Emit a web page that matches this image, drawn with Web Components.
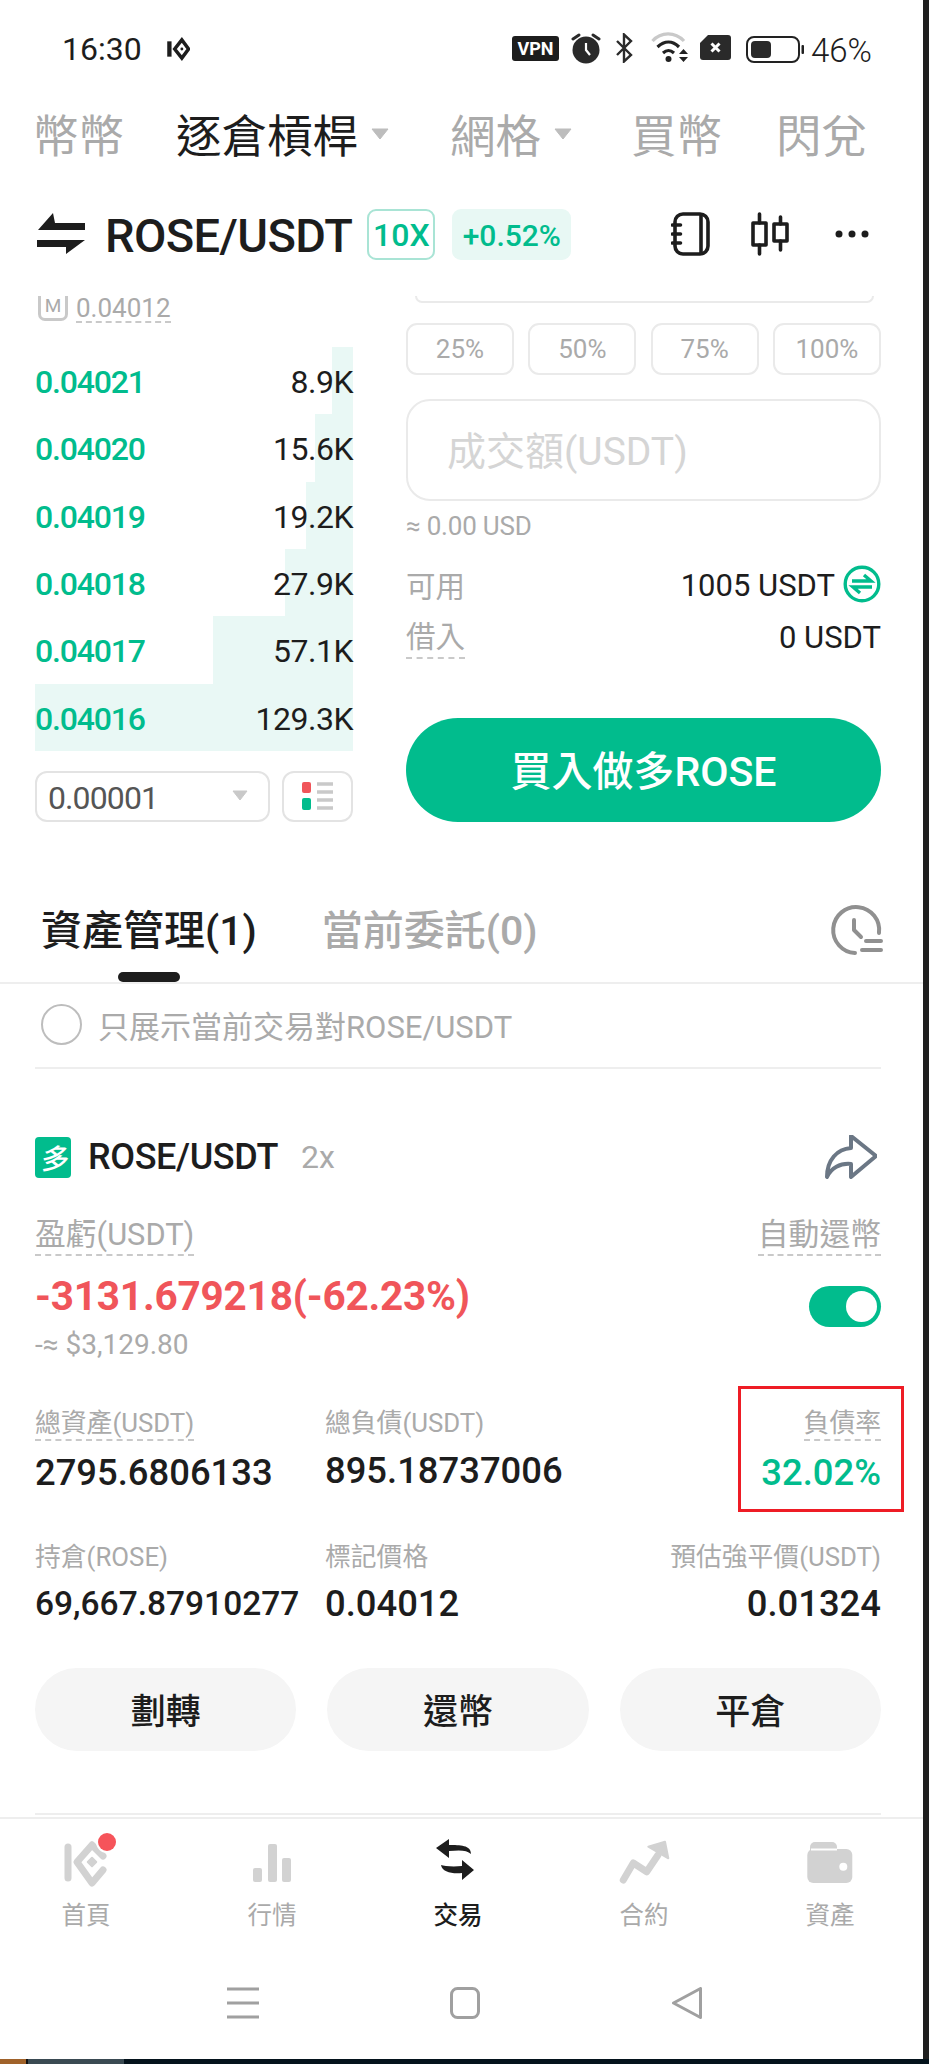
<!DOCTYPE html>
<html lang="zh-Hant">
<head>
<meta charset="UTF-8">
<title>ROSE/USDT</title>
<style>
  html, body { margin: 0; padding: 0; }
  body {
    width: 929px;
    height: 2064px;
    overflow: hidden;
    background: #1f1f1f;
    color: #1d1d1d;
    font-family: Roboto, "Noto Sans CJK TC", sans-serif;
    display: flex;
    flex-direction: column;
  }
  .app {
    width: 923px;
    flex: 1;
    min-height: 0;
    background: #fff;
    display: flex;
    flex-direction: column;
    overflow: hidden;
  }
  .app > :not(position-card) { flex: none; }
</style>
</head>
<body>
<div class="app">
  <status-bar></status-bar>
  <market-tabs>
    <market-tab style="margin-left:33px">幣幣</market-tab>
    <market-tab style="margin-left:52px" active caret>逐倉槓桿</market-tab>
    <market-tab style="margin-left:61px" caret>網格</market-tab>
    <market-tab style="margin-left:59px">買幣</market-tab>
    <market-tab style="margin-left:54px">閃兌</market-tab>
  </market-tabs>
  <pair-header></pair-header>
  <trade-panel>
    <order-book slot="left">
      <book-row price="0.04021" qty="8.9K" w="21.5"></book-row>
      <book-row price="0.04020" qty="15.6K" w="38"></book-row>
      <book-row price="0.04019" qty="19.2K" w="47"></book-row>
      <book-row price="0.04018" qty="27.9K" w="68"></book-row>
      <book-row price="0.04017" qty="57.1K" w="140"></book-row>
      <book-row price="0.04016" qty="129.3K" w="318"></book-row>
    </order-book>
    <trade-form slot="right"></trade-form>
  </trade-panel>
  <asset-tabs></asset-tabs>
  <position-card>
    <stat-cell slot="stats" label="總資產(USDT)" value="2795.6806133" dashed></stat-cell>
    <stat-cell slot="stats" label="總負債(USDT)" value="895.18737006" lift></stat-cell>
    <stat-cell slot="stats" label="負債率" value="32.02%" dashed end up></stat-cell>
    <stat-cell slot="stats" label="持倉(ROSE)" value="69,667.87910277" small near></stat-cell>
    <stat-cell slot="stats" label="標記價格" value="0.04012" near></stat-cell>
    <stat-cell slot="stats" label="預估強平價(USDT)" value="0.01324" end near></stat-cell>
    <pill-button slot="actions">劃轉</pill-button>
    <pill-button slot="actions">還幣</pill-button>
    <pill-button slot="actions">平倉</pill-button>
  </position-card>
  <bottom-nav>
    <nav-item icon="home">首頁</nav-item>
    <nav-item icon="market">行情</nav-item>
    <nav-item icon="trade" active>交易</nav-item>
    <nav-item icon="futures">合約</nav-item>
    <nav-item icon="wallet">資產</nav-item>
  </bottom-nav>
  <gesture-bar></gesture-bar>
</div>
<task-strip></task-strip>

<script>
const green = "#01bc8d";

class StatusBar extends HTMLElement {
  constructor() {
    super();
    this.attachShadow({ mode: "open" }).innerHTML = `
      <style>
        :host { display: flex; align-items: flex-start; height: 90px; box-sizing: border-box; padding: 29px 0 0 62px; color: #1d1d1d; }
        .time { font-size: 32px; line-height: 40px; width: 105px; }
        svg { display: block; flex: none; }
        .k { margin-top: 8px; width: 23px; height: 24px; margin-right: 322px; }
        .pct { font-size: 33px; font-weight: 300; line-height: 44px; margin-left: 7px; }
      </style>
      <span class="time">16:30</span>
      <svg class="k" viewBox="0 0 24 24" fill="none" stroke="#1d1d1d">
        <path d="M2.500 4v16" stroke-width="4.500"/>
        <path d="M15.500 2.500 8 12l7.500 9.500L22.500 12z" stroke-width="3.600"/>
        <circle cx="15.500" cy="12" r="1.500" fill="#1d1d1d" stroke="none"/>
      </svg>
      <svg width="47" height="25" viewBox="0 0 47 25" style="margin-top:7px">
        <rect width="47" height="25" rx="3" fill="#1d1d1d"/>
        <text x="23.500" y="19" text-anchor="middle" font-family="Roboto" font-weight="700" font-size="18" fill="#fff">VPN</text>
      </svg>
      <svg width="30" height="32" viewBox="0 0 30 32" style="margin:3px 0 0 12px">
        <circle cx="15" cy="18" r="13.500" fill="#2a2a2a"/>
        <path d="M2 7l6-4M28 7l-6-4" stroke="#2a2a2a" stroke-width="3" stroke-linecap="round"/>
        <path d="M15 11v7l4 5" fill="none" stroke="#fff" stroke-width="2.200"/>
      </svg>
      <svg width="18" height="30" viewBox="0 0 18 30" style="margin:4px 0 0 14px">
        <path d="M2 8l14 14-7 6.500V1.500L16 8 2 22" fill="none" stroke="#2a2a2a" stroke-width="2.400"/>
      </svg>
      <svg width="38" height="31" viewBox="0 0 38 31" style="margin:3px 0 0 18px">
        <path d="M1.500 9C10-.5 24-.5 33 9" fill="none" stroke="#c9c9c9" stroke-width="3.200"/>
        <path d="M6.500 15c7-6.500 15-6.500 21.500 0M12 21c4-3.500 7-3.500 11 0" fill="none" stroke="#222" stroke-width="3.200"/>
        <circle cx="17.500" cy="27" r="3" fill="#222"/>
        <path d="M28 22h9l-4.500-5zM28 25h9l-4.500 5z" fill="#222"/>
      </svg>
      <svg width="31" height="25" viewBox="0 0 31 25" style="margin:6px 0 0 11px">
        <path d="M8 0h20a3 3 0 0 1 3 3v19a3 3 0 0 1-3 3H3a3 3 0 0 1-3-3V8z" fill="#2a2a2a"/>
        <path d="M11.500 8.500l8 8M19.500 8.500l-8 8" stroke="#fff" stroke-width="3"/>
      </svg>
      <svg width="58" height="27" viewBox="0 0 58 27" style="margin:7px 0 0 15px">
        <rect x="1" y="1" width="52" height="25" rx="7" fill="none" stroke="#222" stroke-width="2"/>
        <rect x="5" y="5" width="20" height="17" rx="4" fill="#2a2a2a"/>
        <rect x="55.500" y="9" width="2.500" height="9" rx="1" fill="#222"/>
      </svg>
      <span class="pct">46%</span>`;
  }
}

class MarketTabs extends HTMLElement {
  constructor() {
    super();
    this.attachShadow({ mode: "open" }).innerHTML = `
      <style>:host { display: flex; align-items: center; height: 90px; box-sizing: border-box; padding-top: 5px; }</style>
      <slot></slot>`;
  }
}

class MarketTab extends HTMLElement {
  constructor() {
    super();
    this.attachShadow({ mode: "open" }).innerHTML = `
      <style>
        :host { display: flex; align-items: center; font-size: 45.500px; line-height: 56px; color: #aaa; }
        :host([active]) { color: #1d1d1d; }
        svg { display: none; margin-left: 13px; margin-top: -8px; }
        :host([caret]) svg { display: block; }
      </style>
      <slot></slot>
      <svg width="18" height="12" viewBox="0 0 18 12"><path d="M1 1h16l-8 10z" fill="#bdbdbd" stroke="#bdbdbd" stroke-linejoin="round"/></svg>`;
  }
}

class PairHeader extends HTMLElement {
  constructor() {
    super();
    this.attachShadow({ mode: "open" }).innerHTML = `
      <style>
        :host { display: flex; align-items: center; height: 116px; box-sizing: border-box; padding: 0 0 8px 37px; }
        svg { display: block; flex: none; }
        .name { font-size: 47px; font-weight: 500; margin: 3px 0 0 20px; letter-spacing: -.6px; white-space: nowrap; }
        .lev, .chg { box-sizing: border-box; height: 51px; border-radius: 9px; display: flex; align-items: center; justify-content: center; color: ${green}; font-weight: 500; }
        .lev { width: 68px; margin-left: 15px; border: 2px solid #a9e4d5; font-size: 32px; padding-top: 2px; }
        .chg { width: 119px; margin-left: 17px; background: #e8f8f4; font-size: 30px; padding-top: 2px; }
        .tools { margin-left: 100px; display: flex; align-items: center; }
      </style>
      <svg width="48" height="42" viewBox="0 0 48 42">
        <path d="M16 0 1 17h47v-7H18zM0 27h48L29 41v-7H0z" fill="#1d1d1d"/>
      </svg>
      <span class="name">ROSE/USDT</span>
      <span class="lev">10X</span>
      <span class="chg">+0.52%</span>
      <div class="tools">
        <svg width="39" height="44" viewBox="0 0 39 44" fill="none" stroke="#1d1d1d" stroke-width="3.600" stroke-linecap="round">
          <rect x="4" y="2" width="33" height="40" rx="8"/>
          <path d="M30 3v38M1.500 13h8M1.500 22h8M1.500 31h8"/>
        </svg>
        <svg width="38" height="44" viewBox="0 0 38 44" fill="none" stroke="#1d1d1d" stroke-width="3.600" stroke-linecap="round" stroke-linejoin="round" style="margin-left:41px">
          <rect x="2" y="11" width="13" height="22"/><path d="M8.500 2v9M8.500 33v9"/>
          <rect x="23" y="12" width="13" height="17"/><path d="M29.500 5v7M29.500 29v9"/>
        </svg>
        <svg width="34" height="8" viewBox="0 0 34 8" fill="#1d1d1d" style="margin-left:46px">
          <circle cx="4" cy="4" r="3.500"/><circle cx="17" cy="4" r="3.500"/><circle cx="30" cy="4" r="3.500"/>
        </svg>
      </div>`;
  }
}

class TradePanel extends HTMLElement {
  constructor() {
    super();
    this.attachShadow({ mode: "open" }).innerHTML = `
      <style>
        :host { display: grid; grid-template-columns: 318px 475px; column-gap: 53px; height: 544px; padding-left: 35px; }
      </style>
      <slot name="left"></slot>
      <slot name="right"></slot>`;
  }
}

class OrderBook extends HTMLElement {
  constructor() {
    super();
    this.attachShadow({ mode: "open" }).innerHTML = `
      <style>
        :host { display: block; }
        .mark { height: 51px; display: flex; align-items: flex-start; padding-left: 3px; box-sizing: border-box; }
        .m { box-sizing: border-box; width: 30px; height: 25px; border: 3px solid #c9c9c9; border-top: none; border-radius: 0 0 7px 7px; font-size: 19px; line-height: 20px; text-align: center; color: #aaa; }
        .v { margin-left: 8px; font-size: 26px; line-height: 24px; height: 25px; color: #aaa; border-bottom: 2px dashed #c9c9c9; }
        .rows { display: grid; grid-auto-rows: 67.330px; }
        .tools { display: flex; gap: 12px; margin-top: 20px; height: 51px; }
        .sel, .mode { box-sizing: border-box; height: 51px; border: 2px solid #e3e3e3; border-radius: 12px; display: flex; align-items: center; }
        .sel { width: 236px; padding: 3px 20px 0 11px; justify-content: space-between; font-size: 32px; letter-spacing: -.9px; color: #555; }
        .sel svg { margin-top: -4px; }
        .mode { width: 71px; justify-content: center; }
      </style>
      <div class="mark"><span class="m">M</span><span class="v">0.04012</span></div>
      <div class="rows"><slot></slot></div>
      <div class="tools">
        <div class="sel"><span>0.00001</span>
          <svg width="16" height="11" viewBox="0 0 16 11"><path d="M1 1h14l-7 9z" fill="#c9c9c9" stroke="#c9c9c9" stroke-linejoin="round"/></svg>
        </div>
        <div class="mode">
          <svg width="32" height="28" viewBox="0 0 32 28">
            <rect width="9" height="11" rx="2" fill="#f0555a"/><rect y="16" width="9" height="12" rx="2" fill="${green}"/>
            <path d="M15 2h16M15 10h16M15 18h16M15 26h16" stroke="#c9c9c9" stroke-width="3.600"/>
          </svg>
        </div>
      </div>`;
  }
}

class BookRow extends HTMLElement {
  constructor() {
    super();
    this.attachShadow({ mode: "open" }).innerHTML = `
      <style>
        :host { display: flex; align-items: center; justify-content: space-between; box-sizing: border-box; padding-top: 3px; font-size: 32px; background: linear-gradient(#e9f8f5, #e9f8f5) right top / var(--w) 100% no-repeat; }
        .p { color: ${green}; font-weight: 500; letter-spacing: -1.200px; }
        .q { letter-spacing: -.5px; }
      </style>
      <span class="p"></span><span class="q"></span>`;
  }
  connectedCallback() {
    this.style.setProperty("--w", this.getAttribute("w") + "px");
    this.shadowRoot.querySelector(".p").textContent = this.getAttribute("price");
    this.shadowRoot.querySelector(".q").textContent = this.getAttribute("qty");
  }
}

class TradeForm extends HTMLElement {
  constructor() {
    super();
    this.attachShadow({ mode: "open" }).innerHTML = `
      <style>
        :host { display: block; }
        .stub { height: 5px; margin: 0 7px 0 9px; border: 2px solid #eaeaea; border-top: none; border-radius: 0 0 14px 14px; }
        .pcts { display: grid; grid-template-columns: repeat(4, 108px); column-gap: 14.300px; margin-top: 20px; }
        .pcts span { box-sizing: border-box; height: 52px; border: 2px solid #eaeaea; border-radius: 11px; display: flex; align-items: center; justify-content: center; font-size: 26px; color: #aaa; }
        .input { box-sizing: border-box; height: 102px; margin-top: 24px; border: 2px solid #eaeaea; border-radius: 24px; padding: 0 0 5px 39px; display: flex; align-items: center; font-size: 39px; color: #d5d5d5; }
        .approx { margin-top: 8px; font-size: 26px; letter-spacing: -.2px; line-height: 34px; color: #aaa; }
        .row { display: flex; justify-content: space-between; align-items: flex-start; }
        .avail { margin-top: 22px; height: 44px; }
        .lab { font-size: 29.500px; line-height: 44px; color: #aaa; }
        .val { font-size: 31px; line-height: 40px; padding-top: 1px; display: flex; gap: 8px; }
        .val svg { display: block; margin-top: -1px; }
        .borrow { margin-top: 8px; }
        .borrow .lab { line-height: 40px; border-bottom: 2px dashed #c9c9c9; }
        button { display: block; width: 475px; height: 104px; margin-top: 59px; padding: 0 0 4px; border: 0; border-radius: 52px; background: ${green}; color: #fff; font: 500 41px Roboto, "Noto Sans CJK TC", sans-serif; }
      </style>
      <div class="stub"></div>
      <div class="pcts"><span>25%</span><span>50%</span><span>75%</span><span>100%</span></div>
      <div class="input">成交額(USDT)</div>
      <div class="approx">≈ 0.00 USD</div>
      <div class="row avail">
        <span class="lab">可用</span>
        <span class="val">1005 USDT
          <svg width="38" height="38" viewBox="0 0 38 38" fill="none" stroke="${green}" stroke-width="3.400">
            <circle cx="19" cy="19" r="16.800"/>
            <path d="M9 16h19l-7-6M29 22H10l7 6"/>
          </svg>
        </span>
      </div>
      <div class="row borrow">
        <span class="lab">借入</span>
        <span class="val">0 USDT</span>
      </div>
      <button>買入做多ROSE</button>`;
  }
}

class AssetTabs extends HTMLElement {
  constructor() {
    super();
    this.attachShadow({ mode: "open" }).innerHTML = `
      <style>
        :host { display: flex; align-items: center; position: relative; box-sizing: border-box; height: 144px; padding: 64px 39px 24px 41px; border-bottom: 2px solid #eee; font-size: 41px; font-weight: 500; line-height: 56px; }
        .off { color: #aaa; margin-left: 65px; flex: 1; }
        svg { display: block; }
        .ind { position: absolute; left: 118px; top: 132px; width: 62px; height: 10px; border-radius: 5px; background: #1d1d1d; }
      </style>
      <span>資產管理(1)</span>
      <span class="off">當前委託(0)</span>
      <svg width="64" height="65" viewBox="0 0 64 65" fill="none" stroke="#909090" stroke-width="4" stroke-linecap="round" stroke-linejoin="round" style="margin-top:-2px">
        <path d="M59 35A23 23 0 1 0 35 55M34 22v10l7 7M46 43h15M42 52h19"/>
      </svg>
      <div class="ind"></div>`;
  }
}

class PositionCard extends HTMLElement {
  constructor() {
    super();
    this.attachShadow({ mode: "open" }).innerHTML = `
      <style>
        :host { display: block; position: relative; flex: 1; min-height: 0; padding: 0 42px 0 35px; }
        .check { box-sizing: border-box; height: 85px; padding-bottom: 2px; border-bottom: 2px solid #eee; display: flex; align-items: center; font-size: 31px; color: #aaa; }
        .check i { box-sizing: border-box; width: 41px; height: 41px; margin: 0 16px 0 6px; border: 2.500px solid #bdbdbd; border-radius: 50%; }
        .head { display: flex; align-items: center; height: 44px; margin-top: 66px; }
        .badge { width: 36px; height: 41px; border-radius: 4px; background: ${green}; color: #fff; font-size: 28px; font-weight: 500; font-style: italic; display: flex; align-items: center; justify-content: center; }
        .sym { font-size: 36px; font-weight: 500; margin-left: 17px; letter-spacing: -.4px; }
        .lev { font-size: 32px; color: #aaa; margin-left: 23px; flex: 1; }
        .head svg { display: block; margin-right: 4px; }
        .row { display: flex; justify-content: space-between; }
        .pl { margin-top: 36px; font-size: 30.800px; line-height: 40px; color: #aaa; }
        .pl span { border-bottom: 2px dashed #c9c9c9; height: 39px; }
        .pnl { margin-top: 17px; height: 55px; }
        .pnl b { font-size: 40.500px; font-weight: 700; line-height: 46px; color: #f0555a; letter-spacing: -.2px; }
        .toggle { box-sizing: border-box; width: 72px; height: 41px; margin-top: 13px; padding: 5px 4px 0 0; border-radius: 21px; background: ${green}; display: flex; justify-content: flex-end; }
        .toggle i { width: 31px; height: 31px; border-radius: 50%; background: #fff; }
        .usd { font-size: 28px; line-height: 34px; color: #aaa; }
        .stats { display: grid; grid-template-columns: 290px 1fr auto; row-gap: 45px; margin-top: 44px; }
        .actions { display: grid; grid-template-columns: repeat(3, 1fr); column-gap: 31px; margin-top: 42px; }
        .end { margin-top: 62px; border-top: 2px solid #eee; }
        .mark { position: absolute; left: 738px; top: 402px; width: 166px; height: 126px; box-sizing: border-box; border: 3px solid #ee1c25; }
      </style>
      <div class="check"><i></i>只展示當前交易對ROSE/USDT</div>
      <div class="head">
        <span class="badge">多</span>
        <span class="sym">ROSE/USDT</span>
        <span class="lev">2x</span>
        <svg width="52" height="44" viewBox="10 8 52 44" fill="none" stroke="#6b7785" stroke-width="4" stroke-linejoin="round">
          <path d="M36 9 61 29 36 50V37C25 36 16 41 12 50 12 33 22 22 36 21Z"/>
        </svg>
      </div>
      <div class="row pl"><span>盈虧(USDT)</span><span>自動還幣</span></div>
      <div class="row pnl"><b>-3131.679218(-62.23%)</b><div class="toggle"><i></i></div></div>
      <div class="usd">-≈ $3,129.80</div>
      <div class="stats"><slot name="stats"></slot></div>
      <div class="actions"><slot name="actions"></slot></div>
      <div class="end"></div>
      <div class="mark"></div>`;
  }
}

class StatCell extends HTMLElement {
  constructor() {
    super();
    this.attachShadow({ mode: "open" }).innerHTML = `
      <style>
        :host { display: flex; flex-direction: column; align-items: flex-start; }
        :host([end]) { align-items: flex-end; }
        .l { font-size: 25.800px; line-height: 34px; height: 35px; color: #aaa; box-sizing: border-box; }
        :host([dashed]) .l { border-bottom: 2px dashed #c9c9c9; }
        .v { margin-top: 10px; font-size: 36.400px; font-weight: 500; line-height: 44px; }
        :host([small]) .v { font-size: 33.500px; }
        :host([lift]) .v { margin-top: 8px; margin-bottom: 2px; }
        :host([near]) .v { margin-top: 7px; }
        :host([up]) .v { color: ${green}; }
      </style>
      <span class="l"></span><span class="v"></span>`;
  }
  connectedCallback() {
    this.shadowRoot.querySelector(".l").textContent = this.getAttribute("label");
    this.shadowRoot.querySelector(".v").textContent = this.getAttribute("value");
  }
}

class PillButton extends HTMLElement {
  constructor() {
    super();
    this.attachShadow({ mode: "open" }).innerHTML = `
      <style>
        :host { display: flex; align-items: center; justify-content: center; box-sizing: border-box; height: 83px; padding-bottom: 2px; border-radius: 42px; background: #f5f5f5; font-size: 35px; font-weight: 500; }
      </style>
      <slot></slot>`;
  }
}

class BottomNav extends HTMLElement {
  constructor() {
    super();
    this.attachShadow({ mode: "open" }).innerHTML = `
      <style>
        :host { display: flex; justify-content: space-between; box-sizing: border-box; height: 143px; padding: 11px 57px 0 50px; border-top: 2px solid #eee; }
      </style>
      <slot></slot>`;
  }
}

const navIcons = {
  home: `<path d="M18 17v31" stroke="#d2d2d2" stroke-width="7" stroke-linecap="round"/>
    <path d="M42 15 27 32l15 21 11-13M42 15l11 11" fill="none" stroke="#d2d2d2" stroke-width="7" stroke-linecap="round" stroke-linejoin="round"/>
    <rect x="38" y="28" width="8" height="8" rx="1" transform="rotate(45 42 32)" fill="#d2d2d2"/>
    <circle cx="57" cy="12" r="11" fill="#fff"/><circle cx="57" cy="12" r="9" fill="#f6545a"/>`,
  market: `<rect x="17" y="38" width="9" height="14" rx="2"/><rect x="32" y="14" width="9" height="38" rx="2"/><rect x="46" y="28" width="9" height="24" rx="2"/>`,
  trade: `<path d="M14 18 27 9v6c11 0 22 0 22 9-4-4-11-4-22-3v7zM52 40 40 30v6c-10 1-18 0-21-1 1 7 11 9 21 8v7z" fill="#1d1d1d"/>`,
  futures: `<path d="M15.300 50 25.300 33l13.400 8.700L50 25" fill="none" stroke="#d2d2d2" stroke-width="7" stroke-linecap="round" stroke-linejoin="round"/>
    <path d="M40.300 16.700 57 11.700l3.300 16.600z" stroke="#d2d2d2" stroke-width="2" stroke-linejoin="round"/>`,
  wallet: `<path d="M16 20v-3a5 5 0 0 1 5-5h17a5 5 0 0 1 5 5v3z"/><rect x="13.300" y="19" width="45" height="34" rx="6"/>
    <path d="M17 19.500h26" stroke="#fff" stroke-width="2"/><circle cx="49.300" cy="36.700" r="4" fill="#fff"/>`
};

class NavItem extends HTMLElement {
  constructor() {
    super();
    this.attachShadow({ mode: "open" }).innerHTML = `
      <style>
        :host { display: flex; flex-direction: column; align-items: center; width: 72px; font-size: 24.500px; line-height: 32px; color: #aaa; }
        :host([active]) { color: #1d1d1d; font-weight: 500; }
        svg { display: block; margin-bottom: 10px; fill: #d2d2d2; }
      </style>
      <svg width="72" height="60" viewBox="0 0 72 60"></svg>
      <slot></slot>`;
  }
  connectedCallback() {
    this.shadowRoot.querySelector("svg").innerHTML = navIcons[this.getAttribute("icon")];
  }
}

class GestureBar extends HTMLElement {
  constructor() {
    super();
    this.attachShadow({ mode: "open" }).innerHTML = `
      <style>
        :host { display: grid; grid-template-columns: repeat(3, 222px); justify-items: center; height: 99px; box-sizing: border-box; padding: 27px 0 0 132px; }
        svg { display: block; }
      </style>
      <svg width="32" height="32" viewBox="0 0 32 32" fill="none" stroke="#a0a0a0" stroke-width="3">
        <path d="M0 2h32M0 16h32M0 30h32"/>
      </svg>
      <svg width="30" height="32" viewBox="0 0 30 32" fill="none" stroke="#a0a0a0" stroke-width="3">
        <rect x="1.500" y="1.500" width="27" height="29" rx="6"/>
      </svg>
      <svg width="30" height="32" viewBox="0 0 30 32" fill="none" stroke="#a0a0a0" stroke-width="3" stroke-linejoin="round">
        <path d="M28.500 1.500v29L1.500 16z"/>
      </svg>`;
  }
}

class TaskStrip extends HTMLElement {
  constructor() {
    super();
    this.attachShadow({ mode: "open" }).innerHTML = `
      <style>
        :host { display: block; flex: none; height: 5px; background: linear-gradient(90deg, #a0622a 0 26px, #111 26px 28px, #3a4a52 28px 124px, #04131c 124px); }
      </style>`;
  }
}

customElements.define("status-bar", StatusBar);
customElements.define("market-tabs", MarketTabs);
customElements.define("market-tab", MarketTab);
customElements.define("pair-header", PairHeader);
customElements.define("trade-panel", TradePanel);
customElements.define("order-book", OrderBook);
customElements.define("book-row", BookRow);
customElements.define("trade-form", TradeForm);
customElements.define("asset-tabs", AssetTabs);
customElements.define("position-card", PositionCard);
customElements.define("stat-cell", StatCell);
customElements.define("pill-button", PillButton);
customElements.define("bottom-nav", BottomNav);
customElements.define("nav-item", NavItem);
customElements.define("gesture-bar", GestureBar);
customElements.define("task-strip", TaskStrip);
</script>
</body>
</html>
